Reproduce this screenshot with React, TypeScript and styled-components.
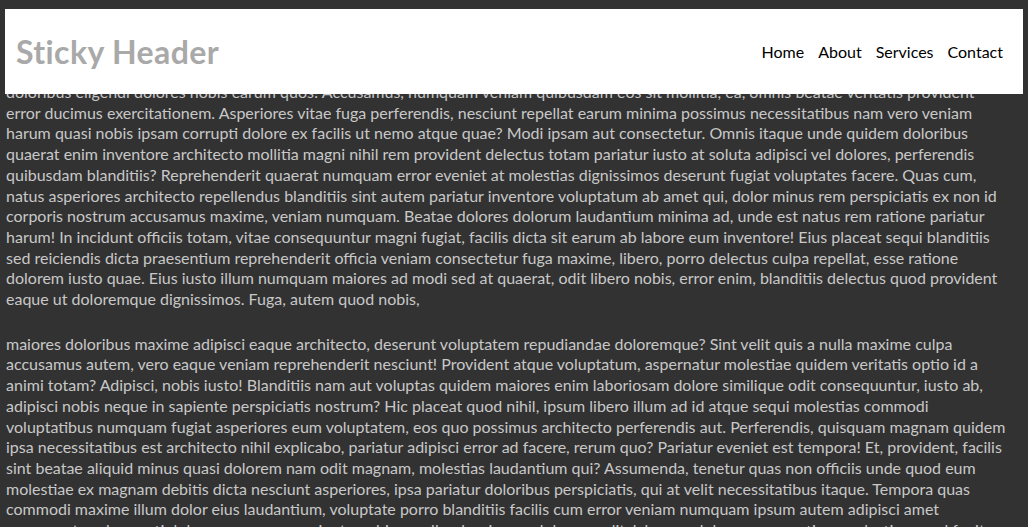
import React from "react";
import styled, { createGlobalStyle } from "styled-components";

const Global = createGlobalStyle`
  html, body {
    margin: 0;
    padding: 0;
    background: #323232;
    overflow: hidden;
  }
`;

const Page = styled.div`
  width: 1028px;
  height: 527px;
  overflow: hidden;
  background: #323232;
  font-family: Lato, "Liberation Sans", sans-serif;
`;

const Header = styled.header`
  position: fixed;
  top: 9px;
  left: 5px;
  right: 5px;
  height: 85px;
  background: #ffffff;
  display: flex;
  align-items: center;
  justify-content: space-between;
  padding: 0 20px 0 11px;
  box-sizing: border-box;
  z-index: 2;
`;

const Title = styled.h1`
  margin: 0;
  font-size: 32px;
  font-weight: 700;
  color: #a9a9a9;
  letter-spacing: 0.4px;
`;

const Nav = styled.nav`
  display: flex;
  gap: 14px;
`;

const NavLink = styled.a`
  color: #000;
  font-size: 16px;
  text-decoration: none;
`;

const Content = styled.main`
  padding: 82px 0 0 6px;
  display: flex;
  flex-direction: column;
  gap: 24px;
`;

const Paragraph = styled.p`
  margin: 0;
  color: #c8c8c8;
  font-size: 16px;
  line-height: 20.7px;
`;

const Line = styled.span`
  display: block;
  white-space: nowrap;
`;

const para1 = [
  "doloribus eligendi dolores nobis earum quos! Accusamus, numquam veniam quibusdam eos sit mollitia, ea, omnis beatae veritatis provident",
  "error ducimus exercitationem. Asperiores vitae fuga perferendis, nesciunt repellat earum minima possimus necessitatibus nam vero veniam",
  "harum quasi nobis ipsam corrupti dolore ex facilis ut nemo atque quae? Modi ipsam aut consectetur. Omnis itaque unde quidem doloribus",
  "quaerat enim inventore architecto mollitia magni nihil rem provident delectus totam pariatur iusto at soluta adipisci vel dolores, perferendis",
  "quibusdam blanditiis? Reprehenderit quaerat numquam error eveniet at molestias dignissimos deserunt fugiat voluptates facere. Quas cum,",
  "natus asperiores architecto repellendus blanditiis sint autem pariatur inventore voluptatum ab amet qui, dolor minus rem perspiciatis ex non id",
  "corporis nostrum accusamus maxime, veniam numquam. Beatae dolores dolorum laudantium minima ad, unde est natus rem ratione pariatur",
  "harum! In incidunt officiis totam, vitae consequuntur magni fugiat, facilis dicta sit earum ab labore eum inventore! Eius placeat sequi blanditiis",
  "sed reiciendis dicta praesentium reprehenderit officia veniam consectetur fuga maxime, libero, porro delectus culpa repellat, esse ratione",
  "dolorem iusto quae. Eius iusto illum numquam maiores ad modi sed at quaerat, odit libero nobis, error enim, blanditiis delectus quod provident",
  "eaque ut doloremque dignissimos. Fuga, autem quod nobis,",
];

const para2 = [
  "maiores doloribus maxime adipisci eaque architecto, deserunt voluptatem repudiandae doloremque? Sint velit quis a nulla maxime culpa",
  "accusamus autem, vero eaque veniam reprehenderit nesciunt! Provident atque voluptatum, aspernatur molestiae quidem veritatis optio id a",
  "animi totam? Adipisci, nobis iusto! Blanditiis nam aut voluptas quidem maiores enim laboriosam dolore similique odit consequuntur, iusto ab,",
  "adipisci nobis neque in sapiente perspiciatis nostrum? Hic placeat quod nihil, ipsum libero illum ad id atque sequi molestias commodi",
  "voluptatibus numquam fugiat asperiores eum voluptatem, eos quo possimus architecto perferendis aut. Perferendis, quisquam magnam quidem",
  "ipsa necessitatibus est architecto nihil explicabo, pariatur adipisci error ad facere, rerum quo? Pariatur eveniet est tempora! Et, provident, facilis",
  "sint beatae aliquid minus quasi dolorem nam odit magnam, molestias laudantium qui? Assumenda, tenetur quas non officiis unde quod eum",
  "molestiae ex magnam debitis dicta nesciunt asperiores, ipsa pariatur doloribus perspiciatis, qui at velit necessitatibus itaque. Tempora quas",
  "commodi maxime illum dolor eius laudantium, voluptate porro blanditiis facilis cum error veniam numquam ipsum autem adipisci amet",
  "consequatur obcaecati doloremque quos sapiente nobis repellendus, ipsum dolorum odit, laborum dolores accusantium molestias quod fugit",
];

export default function App() {
  return (
    <>
      <Global />
      <Page>
        <Header>
          <Title>Sticky Header</Title>
          <Nav>
            <NavLink href="#">Home</NavLink>
            <NavLink href="#">About</NavLink>
            <NavLink href="#">Services</NavLink>
            <NavLink href="#">Contact</NavLink>
          </Nav>
        </Header>
        <Content>
          <Paragraph>
            {para1.map((l, i) => (
              <Line key={i}>{l}</Line>
            ))}
          </Paragraph>
          <Paragraph>
            {para2.map((l, i) => (
              <Line key={i}>{l}</Line>
            ))}
          </Paragraph>
        </Content>
      </Page>
    </>
  );
}
